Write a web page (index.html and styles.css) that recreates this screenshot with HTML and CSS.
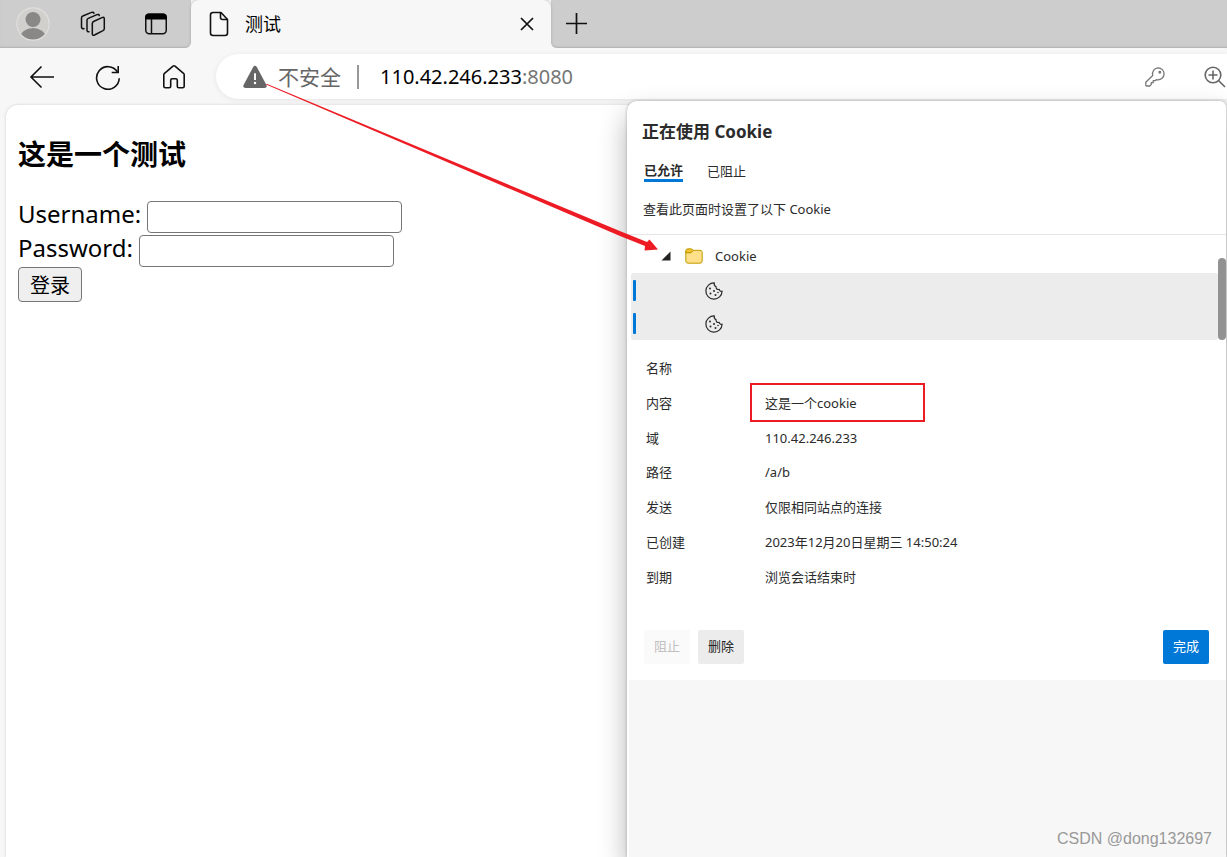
FILE: index.html
```
<!DOCTYPE html>
<html lang="zh-CN">
<head>
<meta charset="utf-8">
<title>测试</title>
<link rel="stylesheet" href="styles.css">
</head>
<body>
<div class="browser">
  <header class="tab-strip">
    <div class="strip-tools">
      <button class="icon-btn" aria-label="个人资料">
        <svg width="34" height="34" viewBox="0 0 34 34"><defs><clipPath id="face"><circle cx="17" cy="17" r="16"/></clipPath></defs><circle cx="17" cy="17" r="16" fill="#d2d0cd"/><g fill="#8a8886" clip-path="url(#face)"><circle cx="17" cy="12.500" r="7.500"/><ellipse cx="17" cy="30" rx="12.500" ry="9"/></g><circle cx="17" cy="17" r="16.200" fill="none" stroke="#e0dfdd" stroke-width="1.200"/></svg>
      </button>
      <button class="icon-btn" aria-label="工作区">
        <svg width="26" height="26" viewBox="0 0 26 26" fill="none" stroke="#111" stroke-width="1.500" stroke-linejoin="round" stroke-linecap="round"><path d="M14 10.200 22 6.600Q24.300 5.700 24.300 8V17.500Q24.300 19 23 19.700L14.500 24Q12.300 24.800 12.300 22.800V12.500Q12.300 11 14 10.200Z"/><path d="M9 20.800Q7 21 7 19V9.300Q7 8 8.300 7.400L17 3.600Q19 3 19.300 4.600"/><path d="M4 17.800Q1.500 17.800 1.500 16V6.800Q1.500 5.500 2.800 5L11.500 1.400Q13.500.8 14 2.200"/></svg>
      </button>
      <button class="icon-btn" aria-label="标签页操作菜单">
        <svg width="24" height="24" viewBox="0 0 24 24"><rect x="1.750" y="2.250" width="20.500" height="19.500" rx="3.500" fill="none" stroke="#111" stroke-width="1.500"/><path d="M1 7.500V5.500Q1 1.500 5 1.500H19Q23 1.500 23 5.500V7.500Z"/><path d="M7.500 7V22" stroke="#111" stroke-width="1.500"/></svg>
      </button>
    </div>
    <div class="tab">
      <svg width="20" height="26" viewBox="0 0 20 26" fill="none" stroke="#111" stroke-width="1.600" stroke-linejoin="round"><path d="M12 1.500H4Q1.500 1.500 1.500 4V22Q1.500 24.500 4 24.500H16Q18.500 24.500 18.500 22V8.500Z"/><path d="M11.500 1.500V6.500Q11.500 8.500 13.500 8.500H18.500"/></svg>
      <span class="tab-title">测试</span>
      <button class="icon-btn" aria-label="关闭标签页"><svg width="14" height="14" viewBox="0 0 14 14" stroke="#111" stroke-width="1.700"><path d="M1 1 13 13M13 1 1 13"/></svg></button>
    </div>
    <div class="strip-rest">
      <button class="icon-btn" aria-label="新建标签页"><svg width="22" height="22" viewBox="0 0 22 22" stroke="#111" stroke-width="1.700"><path d="M10.500 0V21M0 10.500H21"/></svg></button>
    </div>
  </header>

  <nav class="toolbar">
    <div class="nav-buttons">
      <button class="icon-btn" aria-label="返回"><svg width="26" height="26" viewBox="0 0 26 26" fill="none" stroke="#111" stroke-width="1.600"><path d="M25 13H2M12.500 2.500 2 13 12.500 23.500"/></svg></button>
      <button class="icon-btn" aria-label="刷新"><svg width="26" height="26" viewBox="0 0 26 26" fill="none" stroke="#111" stroke-width="1.600"><path d="M24.200 14.300A11.300 11.300 0 1 1 22.500 8"/><path d="M23.200 2V8.500H16.700"/></svg></button>
      <button class="icon-btn" aria-label="主页"><svg width="26" height="26" viewBox="0 0 26 26" fill="none" stroke="#111" stroke-width="1.600" stroke-linejoin="round"><path d="M2.800 10.800Q2.800 10 3.500 9.300L12 2.100Q13 1.300 14 2.100L22.500 9.300Q23.200 10 23.200 10.800V22.200Q23.200 23.700 21.700 23.700H17.800Q16.300 23.700 16.300 22.200V16.300Q16.300 14.800 14.800 14.800H11.200Q9.700 14.800 9.700 16.300V22.200Q9.700 23.700 8.200 23.700H4.300Q2.800 23.700 2.800 22.200Z"/></svg></button>
    </div>
    <div class="address-bar">
      <svg width="24" height="24" viewBox="0 0 25 24"><path d="M10.600 1.700Q12.500-.9 14.400 1.700L24.400 20.300Q25.400 23.200 22.400 23.400H2.600Q-.4 23.200.6 20.300Z" fill="#666"/><path d="M12.500 8V15" stroke="#fff" stroke-width="2"/><circle cx="12.500" cy="18.300" r="1.300" fill="#fff"/></svg>
      <span class="insecure">不安全</span>
      <span class="separator"></span>
      <span class="url">110.42.246.233<span class="port">:8080</span></span>
      <button class="icon-btn" aria-label="密码"><svg width="20" height="20" viewBox="0 0 20 20" fill="none" stroke="#777" stroke-width="1.300" stroke-linejoin="round"><path d="M13.200.9A6 6 0 0 1 19.100 6.800 6 6 0 0 1 11.500 12.600L10.300 13.700H8.200V15.700H6.300V17.400L4.700 19H1.600Q.8 19 .8 18.200V15.300L7.700 8.500A6 6 0 0 1 13.200.9Z"/><circle cx="14.800" cy="5.300" r=".8" fill="#777"/></svg></button>
      <button class="icon-btn" aria-label="缩放"><svg width="23" height="22" viewBox="0 0 23 22" fill="none" stroke="#666" stroke-width="1.600"><circle cx="9" cy="9" r="7.800"/><path d="M9 4.500V13.500M4.500 9H13.500M14.500 14.500 21 21"/></svg></button>
    </div>
  </nav>

  <main class="page">
    <h1>这是一个测试</h1>
    <form>
      <div class="field"><label for="user">Username:</label><input id="user" type="text"></div>
      <div class="field"><label for="pass">Password:</label><input id="pass" type="password"></div>
      <button class="login" type="button">登录</button>
    </form>
  </main>

  <section class="popup" aria-label="正在使用 Cookie">
    <div class="popup-head">
      <h2>正在使用 Cookie</h2>
      <div class="pivots">
        <button class="pivot active">已允许</button>
        <button class="pivot">已阻止</button>
      </div>
      <p>查看此页面时设置了以下 Cookie</p>
    </div>
    <div class="tree">
      <div class="folder">
        <svg width="10" height="10" viewBox="0 0 10 10"><path d="M9.500.5V9.500H.5Z" fill="#222"/></svg>
        <svg width="18" height="16" viewBox="0 0 18 16" stroke="#c19c00" stroke-linejoin="round"><path d="M.8 3V13Q.8 15.200 3 15.200H15Q17.200 15.200 17.200 13V4.500Q17.200 2.300 15 2.300H8.500L6 4.800H.8Z" fill="#ffe08a"/><path d="M.8 4.600V3Q.8.8 3 .8H5.800Q7 .8 8.300 2.300L6.500 4.200Q6 4.600 5.300 4.600Z" fill="#f2c335"/></svg>
        <span>Cookie</span>
      </div>
      <div class="cookies">
        <div class="cookie"><svg width="18" height="18" viewBox="0 0 18 18" fill="none" stroke="#2b2b2b" stroke-width="1.200" stroke-linejoin="round"><path d="M9.300.9A8.100 8.100 0 1 0 17.100 9.200Q14.800 9.900 14.200 7.400 10.900 8 11 4.600 8.700 3.700 9.300.9Z"/><g fill="#2b2b2b" stroke="none"><circle cx="5" cy="6.500" r="1"/><circle cx="9" cy="9" r="1"/><circle cx="5.500" cy="11.500" r="1"/><circle cx="10.500" cy="13" r="1"/><circle cx="13" cy="10.500" r=".8"/></g></svg></div>
        <div class="cookie"><svg width="18" height="18" viewBox="0 0 18 18" fill="none" stroke="#2b2b2b" stroke-width="1.200" stroke-linejoin="round"><path d="M9.300.9A8.100 8.100 0 1 0 17.100 9.200Q14.800 9.900 14.200 7.400 10.900 8 11 4.600 8.700 3.700 9.300.9Z"/><g fill="#2b2b2b" stroke="none"><circle cx="5" cy="6.500" r="1"/><circle cx="9" cy="9" r="1"/><circle cx="5.500" cy="11.500" r="1"/><circle cx="10.500" cy="13" r="1"/><circle cx="13" cy="10.500" r=".8"/></g></svg></div>
      </div>
      <div class="scroll-thumb"></div>
    </div>
    <table class="details">
      <tr><th scope="row">名称</th><td></td></tr>
      <tr><th scope="row">内容</th><td class="marked">这是一个cookie</td></tr>
      <tr><th scope="row">域</th><td>110.42.246.233</td></tr>
      <tr><th scope="row">路径</th><td>/a/b</td></tr>
      <tr><th scope="row">发送</th><td>仅限相同站点的连接</td></tr>
      <tr><th scope="row">已创建</th><td>2023年12月20日星期三 14:50:24</td></tr>
      <tr><th scope="row">到期</th><td>浏览会话结束时</td></tr>
    </table>
    <div class="actions">
      <button class="action" disabled>阻止</button>
      <button class="action">删除</button>
      <button class="action primary">完成</button>
    </div>
    <div class="popup-rest"><span class="watermark">CSDN @dong132697</span></div>
  </section>

  <svg class="arrow" width="394" height="168" viewBox="0 0 394 168"><path d="M0 .5 354 152 379 162 378.500 166.500 392 165.500 383.500 155.500 381 158 355 147.500 0-.5Z" fill="#ed1c24"/></svg>
</div>
</body>
</html>
```
FILE: styles.css
```
*, *::before { box-sizing: border-box; }
body {
  margin: 0;
  background: #f7f7f7;
  color: #000;
  font-family: "Noto Sans", "Noto Sans CJK SC", sans-serif;
}
button { font-family: inherit; }
svg { display: block; flex: none; }

.browser {
  position: relative;
  display: flex;
  flex-direction: column;
  min-height: 100vh;
  overflow: hidden;
}
.icon-btn {
  display: flex;
  flex: none;
  padding: 0;
  border: 0;
  background: none;
}

.tab-strip { display: flex; height: 48px; }
.strip-tools, .strip-rest {
  display: flex;
  align-items: center;
  background: #cdcdcd;
  box-shadow: inset 0 -2px 2px -1px #b0b0b0;
}
.strip-tools {
  gap: 30px;
  width: 191px;
  padding-left: 16px;
  border-bottom-right-radius: 6px;
}
.strip-tools .icon-btn:last-child { margin-left: 8px; }
.strip-rest { flex: 1; padding-left: 15px; border-bottom-left-radius: 6px; }
.tab {
  display: flex;
  align-items: center;
  width: 360px;
  padding: 0 17px 0 18px;
  background: #f7f7f7;
  border-radius: 8px 8px 0 0;
  box-shadow: 0 0 3px #aaa;
  clip-path: inset(0 -4px 4px -4px);
}
.tab-title {
  flex: 1;
  margin-left: 16px;
  font-size: 18px;
  line-height: 24px;
}

.toolbar {
  display: flex;
  align-items: center;
  height: 57px;
}
.nav-buttons {
  display: flex;
  gap: 40px;
  width: 216px;
  padding-left: 29px;
}
.address-bar {
  display: flex;
  flex: 1;
  align-items: center;
  height: 45px;
  padding-left: 27px;
  background: #fff;
  border-radius: 23px 0 0 23px;
  box-shadow: 0 1px 5px #e4e4e4;
  font-size: 20px;
  line-height: 28px;
}
.insecure { margin-left: 11px; color: #666; font-size: 21px; }
.separator { width: 2px; height: 24px; margin: 0 21px 0 16px; background: #999; }
.url { flex: 1; }
.port { color: #767676; }
.address-bar .icon-btn + .icon-btn { margin-left: 39px; }

.page {
  flex: 1;
  margin-left: 6px;
  padding: 28px 12px;
  background: #fff;
  border-radius: 12px 0 0 0;
  box-shadow: 0 0 3px #ccc;
  font-size: 24px;
}
h1 { margin: 0 0 26px; font-size: 28px; line-height: 42px; }
.field { display: flex; align-items: center; gap: 6px; margin-bottom: 2px; }
.field label { font-size: 24px; line-height: 26px; padding-bottom: 6px; }
.field input {
  width: 255px;
  height: 32px;
  border: 1px solid #767676;
  border-radius: 4px;
  background: #fff;
}
.login {
  display: block;
  width: 64px;
  height: 35px;
  margin-top: -2px;
  padding: 0;
  border: 1px solid #767676;
  border-radius: 4px;
  background: #efefef;
  font-size: 20px;
}

.popup {
  position: absolute;
  top: 101px;
  right: 1px;
  bottom: 0;
  left: 627px;
  display: flex;
  flex-direction: column;
  background: #fff;
  border-radius: 10px 6px 0 0;
  box-shadow: 0 0 3px #aaa, 0 14px 28px rgba(0, 0, 0, 0.3);
  color: #2b2b2b;
  font-size: 13px;
  line-height: 20px;
}
.popup-head { height: 134px; padding: 18px 15px 0; border-bottom: 1px solid #e5e5e5; }
h2 { margin: 0; font-size: 17px; line-height: 26px; }
.pivots { display: flex; gap: 24px; margin: 15px 2px 0; height: 28px; }
.pivot {
  height: 22px;
  padding: 0;
  border: 0;
  background: none;
  color: inherit;
  font-size: 13px;
  line-height: 20px;
}
.pivot.active { height: 22px; border-bottom: 3px solid #0078d7; font-weight: 700; }
.popup-head p { margin: 11px 1px 0; }
.tree { position: relative; padding-left: 4px; }
.folder { display: flex; align-items: center; height: 38px; padding: 4px 0 0 30px; }
.folder svg:nth-child(2) { margin: 0 12px 0 14px; }
.cookies { margin-right: 8px; padding-top: 1px; background: #ececec; border-radius: 2px; }
.cookie { display: flex; align-items: center; height: 33px; padding-left: 2px; }
.cookie:last-child { margin-bottom: 1px; }
.cookie::before {
  content: "";
  width: 3px;
  height: 21px;
  margin-right: 69px;
  border-radius: 1px;
  background: #0078d7;
}
.scroll-thumb {
  position: absolute;
  top: 23px;
  right: 0;
  width: 8px;
  height: 82px;
  border-radius: 4px;
  background: #929292;
}
.details {
  height: 243px;
  margin: 10px 16px 0 19px;
  border-collapse: collapse;
}
.details th { width: 119px; padding: 0; font-weight: 400; text-align: left; }
.details td { position: relative; padding: 0; }
.marked::before {
  content: "";
  position: absolute;
  top: -3px;
  left: -15px;
  width: 175px;
  height: 39px;
  border: 2px solid #ed1c24;
}
.actions { display: flex; gap: 8px; padding: 36px 17px 16px; }
.action {
  width: 46px;
  height: 34px;
  padding: 0 0 3px;
  border: 0;
  border-radius: 2px;
  background: #ececec;
  color: #222;
  font-size: 13px;
}
.action:disabled { background: #fafafa; color: #c0c0c0; }
.action.primary { margin-left: auto; background: #0078d7; color: #fff; }
.popup-rest {
  display: flex;
  flex: 1;
  align-items: flex-end;
  justify-content: flex-end;
  margin-left: 2px;
  padding: 0 14px 8px;
  background: #f7f7f7;
}
.watermark { color: #999; font-family: "Liberation Sans", sans-serif; font-size: 16px; }
.arrow { position: absolute; top: 84px; left: 266px; pointer-events: none; }
```
